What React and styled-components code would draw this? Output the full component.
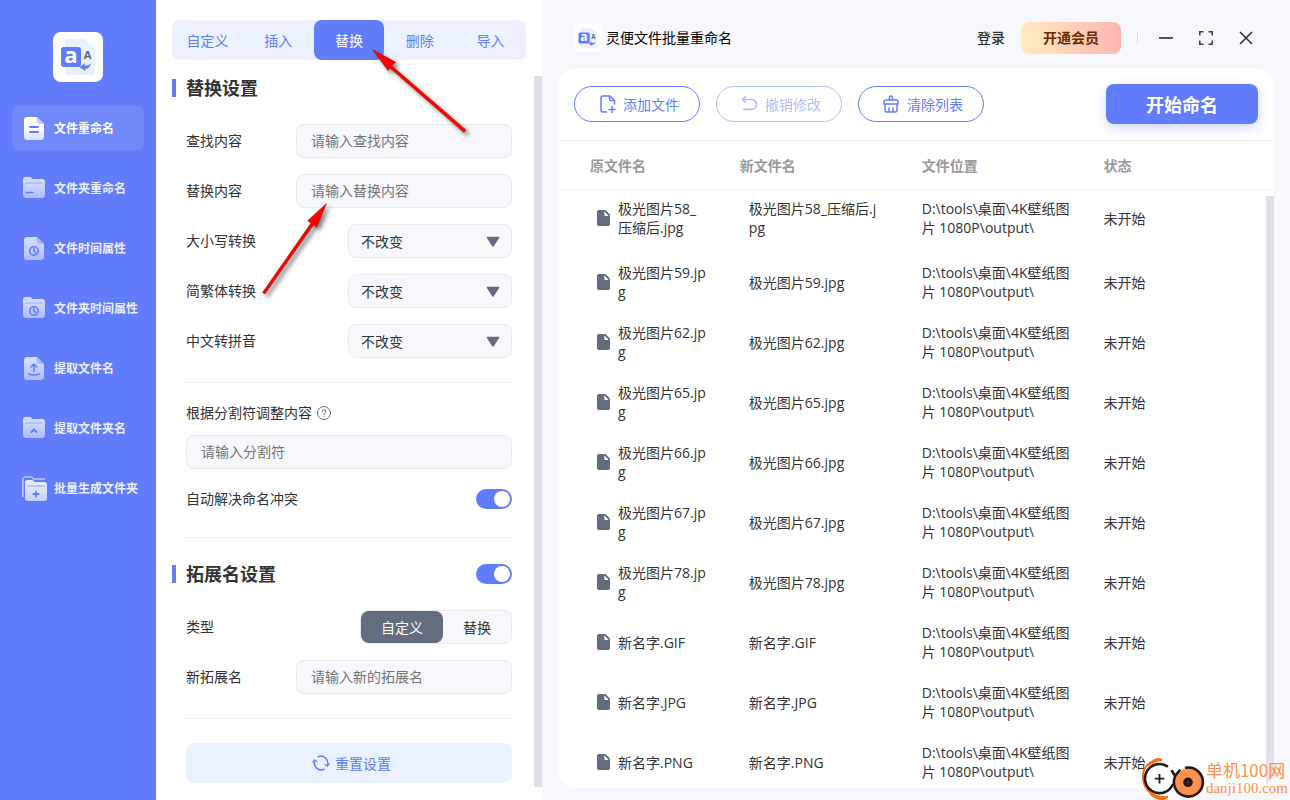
import React, { useState } from "react";
import styled, { createGlobalStyle, css } from "styled-components";

const color = {
  brand: "#617dfc",
  tint: "#ebf1ff",
  surface: "#f6f8fc",
  border: "#e8eaef",
  line: "#f0f1f3",
  text: "#333333",
  slate: "#646c7f",
  track: "#e0e0ea",
};

const GlobalStyle = createGlobalStyle`
  *, *::before, *::after { box-sizing: border-box; }
  body {
    margin: 0;
    font-family: "Open Sans", "Noto Sans CJK SC", sans-serif;
    font-size: 14px;
    line-height: 20px;
    color: ${color.text};
    background: ${color.surface};
  }
  button, input, select { font: inherit; color: inherit; margin: 0; }
  button { border: 0; padding: 0; background: none; cursor: pointer; }
  svg { display: block; flex: none; overflow: visible; }
`;

const Shell = styled.div`
  display: flex;
  height: 100vh;
  overflow: hidden;
  position: relative;
`;

const Caption = styled.span`
  padding-top: 2px;
`;

/* ---------- sidebar ---------- */

const Sidebar = styled.nav`
  flex: none;
  width: 156px;
  padding: 32px 12px;
  background: ${color.brand};
  display: flex;
  flex-direction: column;
  align-items: stretch;
  gap: 24px;
`;

const LogoTile = styled.div`
  align-self: center;
  width: ${(p) => p.$size}px;
  height: ${(p) => p.$size}px;
  border-radius: ${(p) => (p.$size > 40 ? 8 : 4)}px;
  background: #fff;
  overflow: hidden;
`;

const NavList = styled.div`
  display: flex;
  flex-direction: column;
  gap: 16px;
`;

const NavItem = styled.a`
  display: flex;
  align-items: center;
  gap: 8px;
  height: 44px;
  padding-left: 10px;
  border-radius: 6px;
  font-size: 12px;
  font-weight: 700;
  text-decoration: none;
  white-space: nowrap;
  color: ${(p) => (p.$active ? "#fff" : "#e9edff")};
  background: ${(p) => (p.$active ? "#708afb" : "transparent")};
`;

/* ---------- settings ---------- */

const Settings = styled.section`
  flex: none;
  width: 386px;
  padding-top: 20px;
  background: #fff;
  display: flex;
  flex-direction: column;
`;

const Tabs = styled.div`
  display: flex;
  height: 40px;
  margin: 0 16px;
  border-radius: 8px;
  background: ${color.tint};
`;

const Tab = styled.button`
  flex: 1;
  padding-top: 2px;
  border-radius: 8px;
  color: ${(p) => (p.$active ? "#fff" : color.brand)};
  background: ${(p) => (p.$active ? color.brand : "transparent")};
`;

const SettingsBody = styled.div`
  flex: 1;
  min-height: 0;
  display: flex;
`;

const Form = styled.form`
  flex: 1;
  min-width: 0;
  overflow: hidden;
  padding: 15px 22px 0 16px;
`;

const FormScroll = styled.div`
  flex: none;
  width: 8px;
  margin: 16px 0 13px;
  background: ${color.track};
`;

const SectionHead = styled.div`
  display: flex;
  align-items: center;
  height: 26px;
  gap: 10px;
`;

const Bar = styled.span`
  width: 4px;
  height: 18px;
  background: ${color.brand};
`;

const SectionTitle = styled.h2`
  flex: 1;
  margin: 0;
  font-size: 18px;
  line-height: 26px;
  font-weight: 700;
`;

const Group = styled.div`
  margin: 23px 0 24px 14px;
  display: flex;
  flex-direction: column;
  gap: 16px;
`;

const Row = styled.div`
  display: flex;
  align-items: center;
  justify-content: space-between;
  min-height: ${(p) => (p.$compact ? 20 : 34)}px;
`;

const SplitGroup = styled.div`
  margin: 20px 0 28px 14px;
`;

const SplitLabel = styled.div`
  display: flex;
  align-items: center;
  gap: 5px;
  margin-bottom: 12px;
`;

const Divider = styled.hr`
  height: 1px;
  border: 0;
  margin: 0 0 0 14px;
  background: ${color.line};
`;

const SectionGap = styled.div`
  height: 23px;
`;

const field = css`
  height: 34px;
  border: 1px solid ${color.border};
  border-radius: 8px;
  background: ${color.surface};
  outline: none;
`;

const TextInput = styled.input`
  ${field}
  width: ${(p) => (p.$wide ? "100%" : "216px")};
  margin-bottom: ${(p) => (p.$wide ? 20 : 0)}px;
  padding: 0 14px 2px;
  display: block;
  &::placeholder { color: #757575; opacity: 1; }
`;

const SelectWrap = styled.div`
  position: relative;
  width: 164px;
`;

const Select = styled.select`
  ${field}
  width: 100%;
  padding: 2px 32px 0 12px;
  appearance: none;
`;

const Caret = styled.svg`
  position: absolute;
  right: 12px;
  top: 12px;
  pointer-events: none;
`;

const Switch = styled.input`
  appearance: none;
  width: 36px;
  height: 20px;
  padding: 2px;
  border-radius: 10px;
  display: flex;
  justify-content: flex-start;
  background: #c8ccd6;
  cursor: pointer;
  &::before {
    content: "";
    width: 16px;
    height: 16px;
    border-radius: 8px;
    background: #fff;
  }
  &:checked {
    justify-content: flex-end;
    background: ${color.brand};
  }
`;

const Segmented = styled.div`
  ${field}
  display: flex;
  width: 152px;
`;

const Segment = styled.label`
  display: flex;
  align-items: center;
  justify-content: center;
  flex: ${(p) => (p.$grow ? "1" : "0 0 82px")};
  border-radius: 8px;
  cursor: pointer;
  &:has(input:checked) {
    color: #fff;
    background: ${color.slate};
  }
  input {
    appearance: none;
    width: 0;
    height: 0;
  }
`;

const ResetButton = styled.button`
  display: flex;
  align-items: center;
  justify-content: center;
  gap: 6px;
  width: calc(100% - 14px);
  height: 40px;
  margin: 24px 0 0 14px;
  padding-left: 6px;
  border-radius: 8px;
  color: ${color.brand};
  background: ${color.tint};
`;

/* ---------- main area ---------- */

const Main = styled.main`
  flex: 1;
  min-width: 0;
  display: flex;
  flex-direction: column;
  background: ${color.surface};
`;

const TitleBar = styled.header`
  display: flex;
  align-items: center;
  height: 68px;
  padding: 8px 24px 0 32px;
`;

const AppName = styled.h1`
  flex: 1;
  margin: 0 0 0 4px;
  font-size: 14px;
  line-height: 20px;
  font-weight: 400;
  color: #000;
`;

const LoginButton = styled.button`
  font-weight: 500;
  margin-right: 16px;
`;

const VipButton = styled.button`
  width: 100px;
  height: 32px;
  border-radius: 8px;
  font-weight: 700;
  color: #6b2c04;
  background: linear-gradient(90deg, #ffebc0, #feb6b2);
`;

const TitleRule = styled.span`
  width: 1px;
  height: 12px;
  margin: 0 8px 0 16px;
  background: #dcdee4;
`;

const WindowButton = styled.button`
  width: 40px;
  height: 32px;
  display: flex;
  align-items: center;
  justify-content: center;
`;

const Card = styled.section`
  position: relative;
  flex: 1;
  min-height: 0;
  margin: 0 16px 12px;
  border-radius: 20px;
  background: #fff;
  overflow: hidden;
`;

const Toolbar = styled.div`
  display: flex;
  align-items: center;
  gap: 16px;
  height: 72px;
  padding: 0 16px;
`;

const PillButton = styled.button`
  display: flex;
  align-items: center;
  justify-content: center;
  gap: 8px;
  width: 126px;
  height: 36px;
  padding-left: 4px;
  border: 1px solid ${color.brand};
  border-radius: 18px;
  color: ${color.brand};
  background: #fff;
  &:disabled { opacity: 0.5; }
`;

const StartButton = styled.button`
  width: 152px;
  height: 40px;
  margin-left: auto;
  padding-top: 2px;
  border-radius: 8px;
  font-size: 18px;
  font-weight: 700;
  color: #fff;
  background: ${color.brand};
  box-shadow: 0 4px 12px rgba(97, 125, 252, 0.3);
`;

const Table = styled.table`
  width: 100%;
  table-layout: fixed;
  border-collapse: separate;
  border-spacing: 0;
`;

const Th = styled.th`
  width: ${(p) => (p.$last ? "auto" : "25.4%")};
  height: 50px;
  padding: 2px 0 0 ${(p) => (p.$first ? 32 : 0)}px;
  text-align: left;
  font-weight: 700;
  color: #999;
  border-top: 1px solid ${color.line};
  border-bottom: 1px solid ${color.line};
`;

const FileRow = styled.tr`
  height: 60px;
  line-height: 19px;
  &:first-child { height: 62px; }
  &:first-child td { padding-bottom: 6px; }
`;

const Td = styled.td`
  padding: 0 ${(p) => p.$right || 0}px 0 ${(p) => p.$left || 0}px;
  vertical-align: middle;
  word-break: ${(p) => (p.$keep ? "normal" : "break-all")};
`;

const NameCell = styled.div`
  display: flex;
  align-items: center;
  gap: 7px;
`;

const ListScroll = styled.div`
  position: absolute;
  top: 128px;
  right: 0;
  bottom: 4px;
  width: 8px;
  background: ${color.track};
`;

/* ---------- overlays ---------- */

const Annotation = styled.svg`
  position: absolute;
  top: 0;
  left: 0;
  pointer-events: none;
  filter: drop-shadow(3px 3px 2px rgba(0, 0, 0, 0.5));
`;

const Watermark = styled.div`
  position: absolute;
  right: 2px;
  bottom: 0;
  display: flex;
  align-items: center;
  gap: 2px;
  pointer-events: none;
  color: #ff8f4a;
`;

const WatermarkName = styled.div`
  font: 400 17px/20px "Noto Sans CJK SC", sans-serif;
`;

const WatermarkSite = styled.div`
  font: 400 15px/17px "Liberation Serif", serif;
`;

/* ---------- drawings ---------- */

const AppLogo = ({ size }) => (
  <svg width={size} height={size} viewBox="0 0 50 50" aria-hidden="true">
    <path d="M15 7H32L42 17V40a3 3 0 0 1-3 3H15a3 3 0 0 1-3-3V10a3 3 0 0 1 3-3Z" fill="#e9f0ff" />
    <rect x="8" y="15" width="20" height="20" rx="3" fill="#617dfc" />
    <text x="18" y="31" textAnchor="middle" fontFamily="Open Sans" fontWeight="700" fontSize="22" fill="#fff">a</text>
    <text x="34.500" y="27" textAnchor="middle" fontFamily="Open Sans" fontWeight="700" fontSize="11" fill="#5d6578">A</text>
    <path d="M26.5 35.3 32 31l-.6 2.700c2.400.2 4.500-.5 6.800-2.200-1 3.600-3.300 5.400-6.200 5.600l.4 2.200Z" fill="#617dfc" />
  </svg>
);

const DocBody = ({ active }) => (
  <>
    <path
      d="M5 1h9.700L22 8v13a3 3 0 0 1-3 3H5a3 3 0 0 1-3-3V4a3 3 0 0 1 3-3Z"
      fill={active ? "url(#docActive)" : "url(#docIdle)"}
    />
    <path d="M14.700 1 22 8h-5a2.300 2.300 0 0 1-2.300-2.300Z" fill={active ? "#c8d1fd" : "#a9b8fc"} />
  </>
);

const FolderBody = () => (
  <>
    <path
      d="M3.500 1h5l2 2H20a3 3 0 0 1 3 3v13a3 3 0 0 1-3 3H4a3 3 0 0 1-3-3V3.500A2.500 2.500 0 0 1 3.500 1Z"
      fill="url(#docIdle)"
    />
    <path d="M3 8V7.500A1.500 1.500 0 0 1 4.500 6h15A1.500 1.500 0 0 1 21 7.500V8Z" fill="#b4c1fd" />
  </>
);

const Clock = () => (
  <g fill="none" stroke="#617dfc" strokeWidth="1.600" strokeLinecap="round" strokeLinejoin="round">
    <circle cx="12" cy="15" r="4.300" />
    <path d="M12 12.800V15l1.500 1.600" />
  </g>
);

const NavIcon = ({ kind, active }) => {
  const stroke = { fill: "none", stroke: "#617dfc", strokeWidth: 1.8, strokeLinecap: "round", strokeLinejoin: "round" };
  return (
    <svg width="24" height="24" viewBox="0 0 24 24" aria-hidden="true">
      <defs>
        <linearGradient id="docActive" x1="0" y1="0" x2="0" y2="1">
          <stop offset="0.500" stopColor="#fff" />
          <stop offset="1" stopColor="#d5dcff" />
        </linearGradient>
        <linearGradient id="docIdle" x1="0" y1="0" x2="0" y2="1">
          <stop offset="0.200" stopColor="#d3dbff" />
          <stop offset="1" stopColor="#aebcfe" />
        </linearGradient>
        <linearGradient id="folderLight" x1="0" y1="0" x2="0" y2="1">
          <stop offset="0.300" stopColor="#e2e8ff" />
          <stop offset="1" stopColor="#c4cfff" />
        </linearGradient>
      </defs>
      {kind === "file" && (<><DocBody active={active} /><path d="M8 11h8M8 16h8" {...stroke} strokeWidth="2" /></>)}
      {kind === "folder" && (<><FolderBody /><path d="M4 16.500h7" {...stroke} strokeWidth="1.500" /></>)}
      {kind === "fileTime" && (<><DocBody /><Clock /></>)}
      {kind === "folderTime" && (<><FolderBody /><Clock /></>)}
      {kind === "upload" && (
        <><DocBody /><path d="M12 15.500V8.500M9 11l3-3 3 3M6.500 18c3.500 1.200 7.500 1.200 11 0" {...stroke} strokeWidth="1.500" /></>
      )}
      {kind === "folderUp" && (<><FolderBody /><path d="m9.500 16 2.500-2.500 2.500 2.500" {...stroke} /></>)}
      {kind === "batch" && (
        <>
          <path d="M.8 21V3.500A2.500 2.500 0 0 1 3.300 1H9.500l2 2H23" fill="none" stroke="#b9c5fe" strokeWidth="1.600" />
          <path
            d="M5.500 4h5l2 2H22a3 3 0 0 1 3 3v13a3 3 0 0 1-3 3H6a3 3 0 0 1-3-3V6.500A2.500 2.500 0 0 1 5.500 4Z"
            fill="url(#folderLight)"
          />
          <path d="M5 11v-.5A1.500 1.500 0 0 1 6.500 9h15a1.500 1.500 0 0 1 1.500 1.500v.5Z" fill="#b4c1fd" />
          <path d="M14 15.300v5.400M11.300 18h5.400" {...stroke} />
        </>
      )}
    </svg>
  );
};

const line = { fill: "none", stroke: "currentColor", strokeWidth: 1.5, strokeLinecap: "round", strokeLinejoin: "round" };

const AddIcon = () => (
  <svg width="16" height="18" viewBox="0 0 16 18" {...line} aria-hidden="true">
    <path d="M7.500 17H4a2 2 0 0 1-2-2V3a2 2 0 0 1 2-2h6.500L15.500 5.500V9" />
    <path d="M10.500 1v3a1.500 1.500 0 0 0 1.500 1.500h3.500M13 11.500v6M10 14.500h6" />
  </svg>
);

const UndoIcon = () => (
  <svg width="16" height="18" viewBox="0 0 16 18" {...line} strokeWidth="1.700" aria-hidden="true">
    <path d="M4.500 1.500 1.500 4.500 4.500 7.500M1.500 4.500h9a4.900 4.900 0 0 1 0 9.800H3" />
  </svg>
);

const ClearIcon = () => (
  <svg width="16" height="18" viewBox="0 0 16 18" {...line} aria-hidden="true">
    <path d="M6.500 5V2.500a1.500 1.500 0 0 1 3 0V5M2.500 5h11a1.500 1.500 0 0 1 1.500 1.500V9H1V6.500A1.500 1.500 0 0 1 2.500 5ZM2 9v6a2 2 0 0 0 2 2h8a2 2 0 0 0 2-2V9M6 13v4M10 13v4" />
  </svg>
);

const ResetIcon = () => (
  <svg width="16" height="16" viewBox="0 0 16 16" {...line} aria-hidden="true">
    <path d="M5 1.700A7 7 0 0 1 14.300 10.500M11 14.300A7 7 0 0 1 1.700 5.500" />
    <path d="M12 9.500 14.300 11 16 9M4 6.500 1.700 5 0 7" strokeWidth="1.300" />
  </svg>
);

const HelpIcon = () => (
  <svg width="14" height="14" viewBox="0 0 14 14" fill="none" stroke={color.slate} strokeLinecap="round" aria-hidden="true">
    <circle cx="7" cy="7" r="6.500" />
    <path d="M5.200 5.600a1.800 1.800 0 1 1 2.600 1.600c-.6.3-.8.6-.8 1.200M7 10.200v.1" />
  </svg>
);

const FileIcon = () => (
  <svg width="15" height="16" viewBox="0 0 15 16" aria-hidden="true">
    <path d="M3 0h6.500L14 4.500V14a2 2 0 0 1-2 2H3a2 2 0 0 1-2-2V2a2 2 0 0 1 2-2Z" fill={color.slate} />
    <path d="M8.300 1.200V5a1 1 0 0 0 1 1h3.500Z" fill="#fff" />
  </svg>
);

const WatermarkLogo = () => (
  <svg width="64" height="44" viewBox="10 16 64 44" aria-hidden="true">
    <path d="M32 20C20 19 12 27 13 39c1 11 11 20 25 18" fill="none" stroke="#ff6a13" strokeWidth="2" />
    <path d="M32 19.500C26 16 21 22 18 26c4-3 9-5 14-6.500ZM20 54c5 6 15 7 18 3-7 0-12-1-18-3Z" fill="#ff6a13" stroke="#ff6a13" />
    <circle cx="29.500" cy="38.700" r="15" fill="#fff" />
    <path d="M37 26.200A14.500 14.500 0 1 0 42.500 45" fill="none" stroke="#231916" strokeWidth="2.600" strokeLinecap="round" />
    <path d="M29.500 34v9.500M24.700 38.700h9.600" stroke="#231916" strokeWidth="1.800" />
    <circle cx="58.500" cy="42.300" r="14" fill="#ff914f" />
    <path d="M56 27.800A14.500 14.500 0 1 1 45.500 35.500L49.500 30.500M45 36 42 31" fill="none" stroke="#231916" strokeWidth="2.600" strokeLinecap="round" />
    <circle cx="58" cy="42.300" r="4.800" fill="#231916" />
    <circle cx="58" cy="42.300" r="1" fill="#6b4a3c" />
  </svg>
);

/* ---------- data ---------- */

const navItems = [
  ["file", "文件重命名"],
  ["folder", "文件夹重命名"],
  ["fileTime", "文件时间属性"],
  ["folderTime", "文件夹时间属性"],
  ["upload", "提取文件名"],
  ["folderUp", "提取文件夹名"],
  ["batch", "批量生成文件夹"],
];

const tabs = ["自定义", "插入", "替换", "删除", "导入"];

const files = [
  "极光图片58_压缩后.jpg",
  "极光图片59.jpg",
  "极光图片62.jpg",
  "极光图片65.jpg",
  "极光图片66.jpg",
  "极光图片67.jpg",
  "极光图片78.jpg",
  "新名字.GIF",
  "新名字.JPG",
  "新名字.PNG",
];

const folderPath = "D:\\tools\\桌面\\4K壁纸图片 1080P\\output\\";

const InputRow = ({ id, label, placeholder }) => (
  <Row>
    <label htmlFor={id}>{label}</label>
    <TextInput id={id} type="text" placeholder={placeholder} />
  </Row>
);

const SelectRow = ({ id, label }) => (
  <Row>
    <label htmlFor={id}>{label}</label>
    <SelectWrap>
      <Select id={id} defaultValue="none">
        <option value="none">不改变</option>
      </Select>
      <Caret width="14" height="11" viewBox="0 0 14 11" aria-hidden="true">
        <path d="M1.500 1.500h11L7 10Z" fill={color.slate} stroke={color.slate} strokeWidth="1.500" strokeLinejoin="round" />
      </Caret>
    </SelectWrap>
  </Row>
);

export default function App() {
  const [page, setPage] = useState("file");
  const [tab, setTab] = useState("替换");

  return (
    <Shell>
      <GlobalStyle />
      <Sidebar>
        <LogoTile $size={50}><AppLogo size={50} /></LogoTile>
        <NavList>
          {navItems.map(([kind, label]) => (
            <NavItem key={kind} href={`#${kind}`} $active={page === kind} onClick={() => setPage(kind)}>
              <NavIcon kind={kind} active={page === kind} />
              <Caption>{label}</Caption>
            </NavItem>
          ))}
        </NavList>
      </Sidebar>

      <Settings>
        <Tabs role="tablist">
          {tabs.map((name) => (
            <Tab key={name} role="tab" aria-selected={tab === name} $active={tab === name} onClick={() => setTab(name)}>
              {name}
            </Tab>
          ))}
        </Tabs>
        <SettingsBody>
          <Form onSubmit={(e) => e.preventDefault()}>
            <SectionHead>
              <Bar />
              <SectionTitle>替换设置</SectionTitle>
            </SectionHead>
            <Group>
              <InputRow id="find" label="查找内容" placeholder="请输入查找内容" />
              <InputRow id="replace" label="替换内容" placeholder="请输入替换内容" />
              <SelectRow id="case" label="大小写转换" />
              <SelectRow id="script" label="简繁体转换" />
              <SelectRow id="pinyin" label="中文转拼音" />
            </Group>
            <Divider />
            <SplitGroup>
              <SplitLabel>
                <label htmlFor="split">根据分割符调整内容</label>
                <HelpIcon />
              </SplitLabel>
              <TextInput id="split" type="text" placeholder="请输入分割符" $wide />
              <Row $compact>
                <label htmlFor="conflict">自动解决命名冲突</label>
                <Switch id="conflict" type="checkbox" defaultChecked />
              </Row>
            </SplitGroup>
            <Divider />
            <SectionGap />
            <SectionHead>
              <Bar />
              <SectionTitle id="ext-title">拓展名设置</SectionTitle>
              <Switch type="checkbox" defaultChecked aria-labelledby="ext-title" />
            </SectionHead>
            <Group>
              <Row>
                <span id="type-label">类型</span>
                <Segmented role="radiogroup" aria-labelledby="type-label">
                  <Segment>
                    <input type="radio" name="ext-type" defaultChecked />
                    <Caption>自定义</Caption>
                  </Segment>
                  <Segment $grow>
                    <input type="radio" name="ext-type" />
                    <Caption>替换</Caption>
                  </Segment>
                </Segmented>
              </Row>
              <InputRow id="new-ext" label="新拓展名" placeholder="请输入新的拓展名" />
            </Group>
            <Divider />
            <ResetButton type="reset">
              <ResetIcon />
              <Caption>重置设置</Caption>
            </ResetButton>
          </Form>
          <FormScroll />
        </SettingsBody>
      </Settings>

      <Main>
        <TitleBar>
          <LogoTile $size={28}><AppLogo size={28} /></LogoTile>
          <AppName>灵便文件批量重命名</AppName>
          <LoginButton>登录</LoginButton>
          <VipButton>开通会员</VipButton>
          <TitleRule />
          <WindowButton aria-label="最小化">
            <svg width="14" height="14" viewBox="0 0 14 14" stroke="#555" strokeWidth="2"><path d="M0 7h14" /></svg>
          </WindowButton>
          <WindowButton aria-label="最大化">
            <svg width="14" height="14" viewBox="0 0 14 14" fill="none" stroke="#444" strokeWidth="1.600">
              <path d="M.8 4.500V.8h3.700M9.500.8h3.700v3.700M13.200 9.500v3.700H9.500M4.500 13.200H.8V9.500" />
            </svg>
          </WindowButton>
          <WindowButton aria-label="关闭">
            <svg width="12" height="12" viewBox="0 0 12 12" stroke="#333" strokeWidth="1.600"><path d="m0 0 12 12M12 0 0 12" /></svg>
          </WindowButton>
        </TitleBar>

        <Card>
          <Toolbar>
            <PillButton><AddIcon /><Caption>添加文件</Caption></PillButton>
            <PillButton disabled><UndoIcon /><Caption>撤销修改</Caption></PillButton>
            <PillButton><ClearIcon /><Caption>清除列表</Caption></PillButton>
            <StartButton>开始命名</StartButton>
          </Toolbar>
          <Table>
            <thead>
              <tr>
                <Th $first>原文件名</Th>
                <Th>新文件名</Th>
                <Th>文件位置</Th>
                <Th $last>状态</Th>
              </tr>
            </thead>
            <tbody>
              {files.map((name) => (
                <FileRow key={name}>
                  <Td $left={38} $right={32}>
                    <NameCell><FileIcon /><span>{name}</span></NameCell>
                  </Td>
                  <Td $left={9} $right={42}>{name}</Td>
                  <Td $right={22} $keep>{folderPath}</Td>
                  <Td>未开始</Td>
                </FileRow>
              ))}
            </tbody>
          </Table>
          <ListScroll />
        </Card>
      </Main>

      <Annotation width="480" height="310" viewBox="0 0 480 310" aria-hidden="true">
        <g fill="#f00" stroke="#a01010" strokeWidth="0.500">
          <path d="M372.500 49.500 395.700 62.300 391.500 65.500 466 130 464 132.500 390 68 388 70.500Z" />
          <path d="M326.500 203.500 316.800 227.200 313.500 225 265 294 262.500 292.500 311 223 307.600 220.800Z" />
        </g>
      </Annotation>

      <Watermark>
        <WatermarkLogo />
        <div>
          <WatermarkName>单机100网</WatermarkName>
          <WatermarkSite>danji100.com</WatermarkSite>
        </div>
      </Watermark>
    </Shell>
  );
}
